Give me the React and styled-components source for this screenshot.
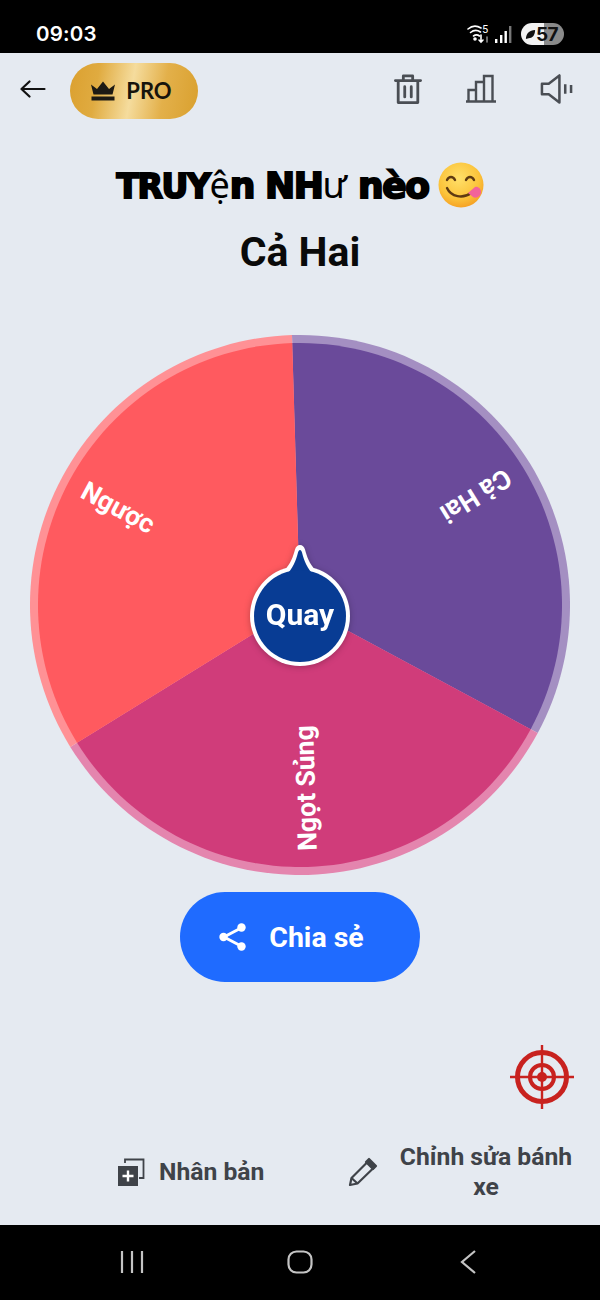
import React from "react";
import styled, { createGlobalStyle } from "styled-components";

const Global = createGlobalStyle`
  html, body { margin: 0; padding: 0; background: #000; }
  * { box-sizing: border-box; }
`;
const Page = styled.div`
  width: 600px; height: 1300px; display: flex; flex-direction: column;
  background: #e5eaf1; font-family: Roboto, "Liberation Sans", sans-serif; overflow: hidden;
`;
const StatusBar = styled.div`
  height: 53px; flex: none; background: #000; color: #fff; display: flex; align-items: center;
  justify-content: space-between; padding: 15px 36px 0 36px;
`;
const Time = styled.span`font: 600 20.5px/1 Inter, Roboto, sans-serif; letter-spacing: .2px;`;
const StatusIcons = styled.div`display: flex; align-items: center; gap: 3px;`;
const Battery = styled.div`
  width: 43px; height: 22px; border-radius: 11px; margin-left: 6px; display: flex; align-items: center; gap: 0; padding-left: 4px;
  background: linear-gradient(90deg, #f2f2f2 0 54%, #8a8a8a 54% 100%); color: #111;
  font: 700 19px/1 Inter, Roboto, sans-serif; letter-spacing: -.6px;
`;
const Header = styled.header`
  height: 72px; flex: none; display: flex; align-items: center; padding: 0 27px 0 20px;
`;
const BackBtn = styled.div`width: 50px; display: flex; flex: none;`;
const ProPill = styled.div`
  width: 128px; height: 56px; margin-top: 4px; border-radius: 28px; display: flex; align-items: center; justify-content: center; gap: 10px; padding-right: 6px;
  background: linear-gradient(100deg, #dba02f 0%, #e0ab40 22%, #f5dc9d 48%, #e3b04a 72%, #d9a02e 100%);
  color: #17140c; font: 700 22px/1 Lato, sans-serif;
`;
const Tools = styled.div`margin-left: auto; display: flex; align-items: center; gap: 43px;`;
const Title = styled.h1`
  margin: 37px 0 0; height: 46px; display: flex; align-items: center; justify-content: center; gap: 9px;
  font: 900 36px/1 "DejaVu Sans", sans-serif; color: #000;
`;
const TitleText = styled.span`
  -webkit-text-stroke: 2px #000; letter-spacing: -1.4px; white-space: pre;
`;
const Thin = styled.span`
  font: 400 36px/1 "Noto Sans", sans-serif; -webkit-text-stroke: 0; letter-spacing: 0;
`;
const Small = styled.span`font-size: ${p => p.$s}px;`;
const Result = styled.h2`
  margin: 22px 0 0; text-align: center; font: 700 41px/44px Roboto, sans-serif; color: #0a0a0a;
`;
const WheelWrap = styled.div`
  position: relative; width: 540px; height: 540px; margin: 59px auto 0; flex: none;
`;
const LabelText = styled.text`
  font: 700 26.5px Roboto, sans-serif; fill: #fff; dominant-baseline: central;
`;
const Hub = styled.div`
  position: absolute; left: 217px; top: 211px; width: 106px; height: 128px;
  filter: drop-shadow(0 1px 3px rgba(0,0,0,.25));
`;
const HubLabel = styled.span`
  position: absolute; left: 0; right: 0; top: 49px; text-align: center; color: #fff;
  font: 700 30px/44px Roboto, sans-serif;
`;
const ShareBtn = styled.button`
  display: flex; align-items: center; justify-content: center; gap: 21px; width: 240px; height: 90px; margin: 19px auto 0;
  border: 0; border-radius: 45px; background: #1f6bff; color: #fff; font: 700 28.5px/1 Roboto, sans-serif; padding: 0 18px 0 0;
`;
const ShareLabel = styled.span`margin-top: 2px;`;
const TargetRow = styled.div`display: flex; justify-content: flex-end; padding-right: 25px; margin-top: 62px;`;
const Actions = styled.div`
  display: flex; flex: none; margin-top: 31px; height: 62px; align-items: center; padding-left: 117px; color: #3f4349;
`;
const Action = styled.div`
  display: flex; align-items: center; gap: ${p => p.$gap}px; font: 700 24.7px/30px Roboto, sans-serif; width: ${p => p.$w}px; flex: none;
`;
const ActionLabel = styled.span`text-align: center; width: ${p => p.$w}px; flex: none;`;
const Spacer = styled.div`flex: 1;`;
const NavBar = styled.nav`
  height: 75px; flex: none; background: #000; display: grid; grid-template-columns: 24px 143px 26px 147px 16px; align-items: center; padding: 0 0 2px 120px;
`;

const CX = 270, CY = 272, R = 270, RI = 262;
const pt = (deg, r) => [CX + r * Math.sin(deg * Math.PI / 180), CY - r * Math.cos(deg * Math.PI / 180)];
const seg = (a, b, r) => {
  const [x1, y1] = pt(a, r), [x2, y2] = pt(b, r);
  return `M${CX} ${CY}L${x1} ${y1}A${r} ${r} 0 0 1 ${x2} ${y2}Z`;
};
const START = -1.7;
const segments = [
  { label: "Cả Hai", color: "#6a4a9a", rim: "#a48fc2", from: START },
  { label: "Ngọt Sủng", color: "#d03c7a", rim: "#e485ae", from: START + 120 },
  { label: "Ngược", color: "#ff5a5f", rim: "#ff9195", from: START + 240 },
];

const Wheel = () => (
  <svg width="540" height="540" viewBox="0 0 540 540" style={{ display: "block", overflow: "visible" }}>
    {segments.map(s => <path key={s.label + "r"} d={seg(s.from, s.from + 120, R)} fill={s.rim} />)}
    {segments.map(s => <path key={s.label} d={seg(s.from, s.from + 120, RI)} fill={s.color} />)}
    {segments.map(s => {
      const mid = s.from + 60;
      const [x, y] = pt(mid, 246);
      return <LabelText key={s.label + "t"} x={x} y={y} transform={`rotate(${mid + 90} ${x} ${y})`}>{s.label}</LabelText>;
    })}
  </svg>
);

const stroke = { fill: "none", stroke: "#4a4e54", strokeWidth: 2.6 };

export default function App() {
  return (
    <Page>
      <Global />
      <StatusBar>
        <Time>09:03</Time>
        <StatusIcons>
          <svg width="24" height="22" viewBox="0 0 24 22" fill="none" stroke="#fff" strokeWidth="1.600" strokeLinecap="round">
            <path d="M1 6c4-3.500 9-3.500 13-1" /><path d="M3.500 9.500c3-2.500 7-2.500 10-.5" /><path d="M6.500 13c2-1.500 4-1.500 6 0" />
            <circle cx="8" cy="16" r="1" fill="#fff" />
            <path d="M14 12v7m-2-2 2 2 2-2" /><path d="M20 19v-5" stroke="#888" />
            <text x="15" y="10" fill="#fff" stroke="none" fontSize="11" fontFamily="Roboto">5</text>
          </svg>
          <svg width="18" height="22" viewBox="0 0 18 22" fill="#fff">
            <rect x="1" y="16" width="2.400" height="4" /><rect x="6" y="12" width="2.400" height="8" /><rect x="10.500" y="8" width="2.400" height="12" /><rect x="15" y="3" width="2.400" height="17" fill="#777" />
          </svg>
          <Battery>
            <svg width="11" height="11" viewBox="0 0 12 12"><path d="M1 11C1 5 5 1 11 1c0 6-3 9-7 9L1 11Z" fill="#111" /></svg>
            <span>57</span>
          </Battery>
        </StatusIcons>
      </StatusBar>

      <Header>
        <BackBtn>
          <svg width="26" height="20" viewBox="0 0 26 20" fill="none" stroke="#111" strokeWidth="2.200" strokeLinecap="round" strokeLinejoin="round">
            <path d="M24.500 10H1.500M9.500 2.500 1.500 10l8 7.500" />
          </svg>
        </BackBtn>
        <ProPill>
          <svg width="26" height="20" viewBox="0 0 26 20" fill="#1d1a14">
            <path d="M1 3.500l6 4.500 6-7.500 6 7.500 6-4.500-2.500 10h-19Z" /><rect x="1.500" y="15.500" width="23" height="4" />
          </svg>
          <span>PRO</span>
        </ProPill>
        <Tools>
          <svg width="28" height="32" viewBox="0 0 30 33" {...stroke} strokeLinejoin="round" strokeLinecap="round">
            <path d="M1.500 7.500h27M10 7V2.500h10V7M4.500 8v23h21V8M11.500 14v11M18.500 14v11" strokeWidth="3" />
          </svg>
          <svg width="32" height="30" viewBox="0 0 32 30" {...stroke} strokeWidth="2.400">
            <path d="M1 27.500h30M3.500 27V16H11v11M11 27V8h8v19M19 27V2h8.500v25" />
          </svg>
          <svg width="33" height="32" viewBox="0 0 34 32" {...stroke} strokeLinejoin="round" strokeWidth="2.600">
            <path d="M2 10.500h7L20 2v28L9 21.500H2Z" /><path d="M26 11v10M32 12v8" strokeWidth="2.600" />
          </svg>
        </Tools>
      </Header>

      <Title>
        <TitleText>
          <Small $s={33}>TRUY</Small><Thin>ệ</Thin>n NH<Thin>ư</Thin> nèo
        </TitleText>
        <svg width="46" height="46" viewBox="0 0 46 46">
          <defs>
            <radialGradient id="face" cx="45%" cy="35%" r="70%">
              <stop offset="0%" stopColor="#ffe06a" /><stop offset="65%" stopColor="#fbc33a" /><stop offset="100%" stopColor="#f49a20" />
            </radialGradient>
          </defs>
          <circle cx="23" cy="23" r="22.500" fill="url(#face)" />
          <path d="M9 18c2-4 6-4 8 0M28 18c2-4 6-4 8 0" fill="none" stroke="#5e3a12" strokeWidth="2.400" strokeLinecap="round" />
          <path d="M9 26c4 9 16 11 24 5" fill="none" stroke="#5e3a12" strokeWidth="2.400" strokeLinecap="round" />
          <path d="M30 31l7-6c3-1 6 2 6 5 0 4-5 7-8 5Z" fill="#f2639a" />
        </svg>
      </Title>
      <Result>Cả Hai</Result>

      <WheelWrap>
        <Wheel />
        <Hub>
          <svg width="106" height="128" viewBox="0 0 106 128">
            <path d="M53 1c2.500 0 4 1.500 5 4.500 2 7 4 14 11 21 H37 c7-7 9-14 11-21 1-3 2.500-4.500 5-4.500Z" fill="#fff" />
            <circle cx="53" cy="72" r="50" fill="#fff" />
            <path d="M53 6c1 0 1.500 1 2 2.500 2 8 5 16 13 24 H38 c8-8 11-16 13-24 .5-1.500 1-2.500 2-2.500Z" fill="#083c94" />
            <circle cx="53" cy="72" r="46" fill="#083c94" />
          </svg>
          <HubLabel>Quay</HubLabel>
        </Hub>
      </WheelWrap>

      <ShareBtn>
        <svg width="30" height="30" viewBox="0 0 30 30" fill="#fff" stroke="#fff">
          <path d="M23 6 6 15l17 9" fill="none" strokeWidth="3" />
          <circle cx="23.500" cy="5.500" r="4.200" stroke="none" /><circle cx="5.500" cy="15" r="4.200" stroke="none" /><circle cx="23.500" cy="24.500" r="4.200" stroke="none" />
        </svg>
        <ShareLabel>Chia sẻ</ShareLabel>
      </ShareBtn>

      <TargetRow>
        <svg width="66" height="66" viewBox="0 0 66 66" fill="none" stroke="#c8221f">
          <circle cx="33" cy="33" r="24.500" strokeWidth="5" />
          <circle cx="33" cy="33" r="12" strokeWidth="4" />
          <circle cx="33" cy="33" r="5" fill="#c8221f" strokeWidth="0" />
          <path d="M33 1v64M1 33h64" strokeWidth="2.400" />
        </svg>
      </TargetRow>

      <Actions>
        <Action $gap={14} $w={231}>
          <svg width="28" height="28" viewBox="0 0 28 28">
            <path d="M8 5V1.500h18.500V20H22" fill="none" stroke="#3f4349" strokeWidth="1.800" />
            <rect x="1" y="8" width="20" height="20" fill="#3f4349" />
            <path d="M11 12.500v11M5.500 18h11" stroke="#fff" strokeWidth="2.400" />
          </svg>
          <span>Nhân bản</span>
        </Action>
        <Action $gap={21} $w={226}>
          <svg width="30" height="30" viewBox="0 0 30 30" fill="none" stroke="#3f4349" strokeWidth="2.200" strokeLinejoin="round" style={{ flex: "none" }}>
            <path d="M2 28l1.500-7L19.500 5l6 6L9.500 26.500Z" />
            <path d="M3.500 21l6 5.500" />
            <path d="M21 2l7 7-3 3-7-7Z" fill="#3f4349" />
          </svg>
          <ActionLabel $w={174}>Chỉnh sửa bánh xe</ActionLabel>
        </Action>
      </Actions>
      <Spacer />

      <NavBar>
        <svg width="24" height="24" viewBox="0 0 24 24" stroke="#c4c4c4" strokeWidth="2.200"><path d="M2 1v22M12 1v22M22 1v22" /></svg>
        <span />
        <svg width="26" height="24" viewBox="0 0 26 24" fill="none" stroke="#c4c4c4" strokeWidth="2.200"><rect x="1.500" y="1.500" width="23" height="21" rx="8" /></svg>
        <span />
        <svg width="16" height="24" viewBox="0 0 16 24" fill="none" stroke="#c4c4c4" strokeWidth="2.200"><path d="M15 1 2 12l13 11" /></svg>
      </NavBar>
    </Page>
  );
}
